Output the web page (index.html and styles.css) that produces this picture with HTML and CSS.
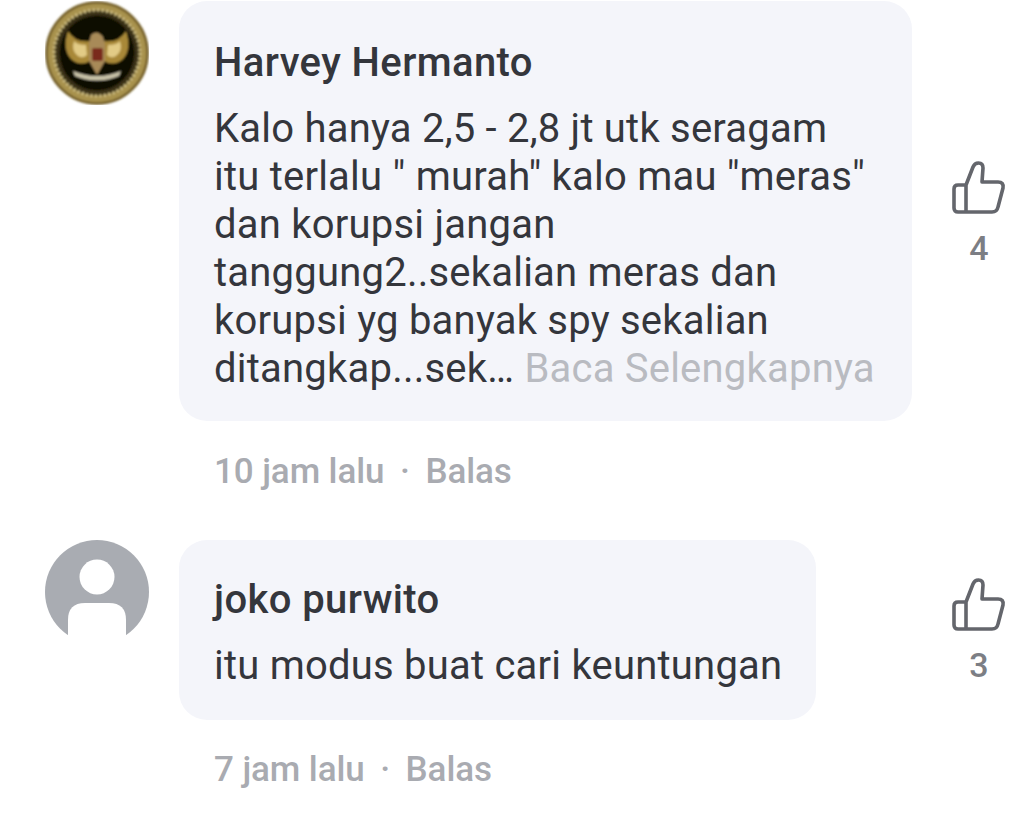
FILE: index.html
```html
<!DOCTYPE html>
<html lang="en">
<head>
    <meta charset="UTF-8">
    <title>Komentar</title>
    <link rel="stylesheet" href="styles.css">
</head>
<body>
    <div class="comment first">
        <svg class="avatar" viewBox="0 0 104 104">
            <defs><filter id="soft"><feGaussianBlur stdDeviation="1"/></filter></defs>
            <g filter="url(#soft)">
                <circle cx="52" cy="52" r="50.5" fill="#a8924e" stroke="#6f5a24" stroke-width="2.5"/>
                <circle cx="52" cy="52" r="43" fill="#3b3116"/>
                <circle cx="52" cy="52" r="43" fill="none" stroke="#d8c88c" stroke-width="3" stroke-dasharray="2 2.5"/>
                <circle cx="52" cy="52" r="37.5" fill="#090806"/>
                <path d="M45 40 Q30 42 23 30 Q17 48 26 58 Q35 66 45 60 Z" fill="#a88838"/>
                <path d="M59 40 Q74 42 81 30 Q87 48 78 58 Q69 66 59 60 Z" fill="#a88838"/>
                <path d="M41 44 Q32 44 29 40 Q26 50 33 55 Q38 58 42 54 Z" fill="#e2cb86"/>
                <path d="M63 44 Q72 44 75 40 Q78 50 71 55 Q66 58 62 54 Z" fill="#e2cb86"/>
                <path d="M46 34 Q52 28 58 36 L60 44 L60 60 L52 74 L44 60 L44 42 Z" fill="#a88a58"/>
                <rect x="47" y="47" width="11" height="13" rx="2" fill="#7a2a1c"/>
                <path d="M28 70 Q52 80 76 70 L74 75 Q52 84 30 75 Z" fill="#c8c2a8"/>
            </g>
        </svg>
        <div class="main">
            <div class="bubble wide">
                <div class="name">Harvey Hermanto</div>
                <div class="text">Kalo hanya 2,5 - 2,8 jt utk seragam<br>itu terlalu " murah" kalo mau "meras"<br>dan korupsi jangan<br>tanggung2..sekalian meras dan<br>korupsi yg banyak spy sekalian<br>ditangkap...sek… <span class="more">Baca Selengkapnya</span></div>
            </div>
            <div class="meta">10 jam lalu <span class="dot">·</span> Balas</div>
        </div>
        <div class="like first-like">
            <svg class="thumb" viewBox="0 0 54 54"><path d="M14 24 L21 6 Q22.5 2 26.5 2 Q31 2 31 7 L30 21 H46 Q52 21 51 27 L46 46 Q45 51 40 51 H6 Q2 51 2 47 V28 Q2 24 6 24 H14 V51" fill="none" stroke="#64666c" stroke-width="3.6" stroke-linejoin="round"/></svg>
            <span>4</span>
        </div>
    </div>
    <div class="comment second">
        <svg class="avatar" viewBox="0 0 104 106">
            <circle cx="52" cy="52" r="52" fill="#a9acb2"/>
            <circle cx="52" cy="37" r="17.5" fill="#fff"/>
            <path d="M23 106 V80 Q23 63 40 63 H64 Q81 63 81 80 V106 Z" fill="#fff"/>
        </svg>
        <div class="main">
            <div class="bubble narrow">
                <div class="name">joko purwito</div>
                <div class="text">itu modus buat cari keuntungan</div>
            </div>
            <div class="meta">7 jam lalu <span class="dot">·</span> Balas</div>
        </div>
        <div class="like second-like">
            <svg class="thumb" viewBox="0 0 54 54"><path d="M14 24 L21 6 Q22.5 2 26.5 2 Q31 2 31 7 L30 21 H46 Q52 21 51 27 L46 46 Q45 51 40 51 H6 Q2 51 2 47 V28 Q2 24 6 24 H14 V51" fill="none" stroke="#64666c" stroke-width="3.6" stroke-linejoin="round"/></svg>
            <span>3</span>
        </div>
    </div>
</body>
</html>
```
FILE: styles.css
```css
body { margin: 0; background: #fff; font-family: Roboto, "Liberation Sans", sans-serif; color: #34363c; overflow: hidden; }
.comment { display: flex; padding-left: 45px; }
.first { padding-top: 1px; }
.second { margin-top: 48px; }
.avatar { width: 104px; height: 106px; flex-shrink: 0; }
.first .avatar { height: 104px; }
.main { margin-left: 30px; width: 773px; }
.bubble { background: #f4f5fa; border-radius: 28px; padding: 0 35px; box-sizing: border-box; }
.wide { width: 733px; height: 420px; padding-top: 40px; }
.narrow { width: 637px; height: 180px; padding-top: 38px; }
.name { font-size: 40px; line-height: 44px; font-weight: 500; letter-spacing: 0.4px; }
.text { font-size: 40px; line-height: 48px; margin-top: 20px; letter-spacing: 0.22px; white-space: nowrap; }
.more { color: #b9bbc1; }
.meta { font-size: 35px; line-height: 40px; font-weight: 500; color: #a9abb1; margin-top: 30px; padding-left: 35px; letter-spacing: -0.1px; }
.first .meta { margin-top: 31px; }
.dot { margin: 0 7px; }
.like { display: flex; flex-direction: column; align-items: center; width: 54px; color: #7c7e84; font-size: 34px; font-weight: 500; }
.first-like { margin-top: 160px; }
.second-like { margin-top: 38px; }
.thumb { width: 54px; height: 54px; margin-bottom: 13px; }
```
